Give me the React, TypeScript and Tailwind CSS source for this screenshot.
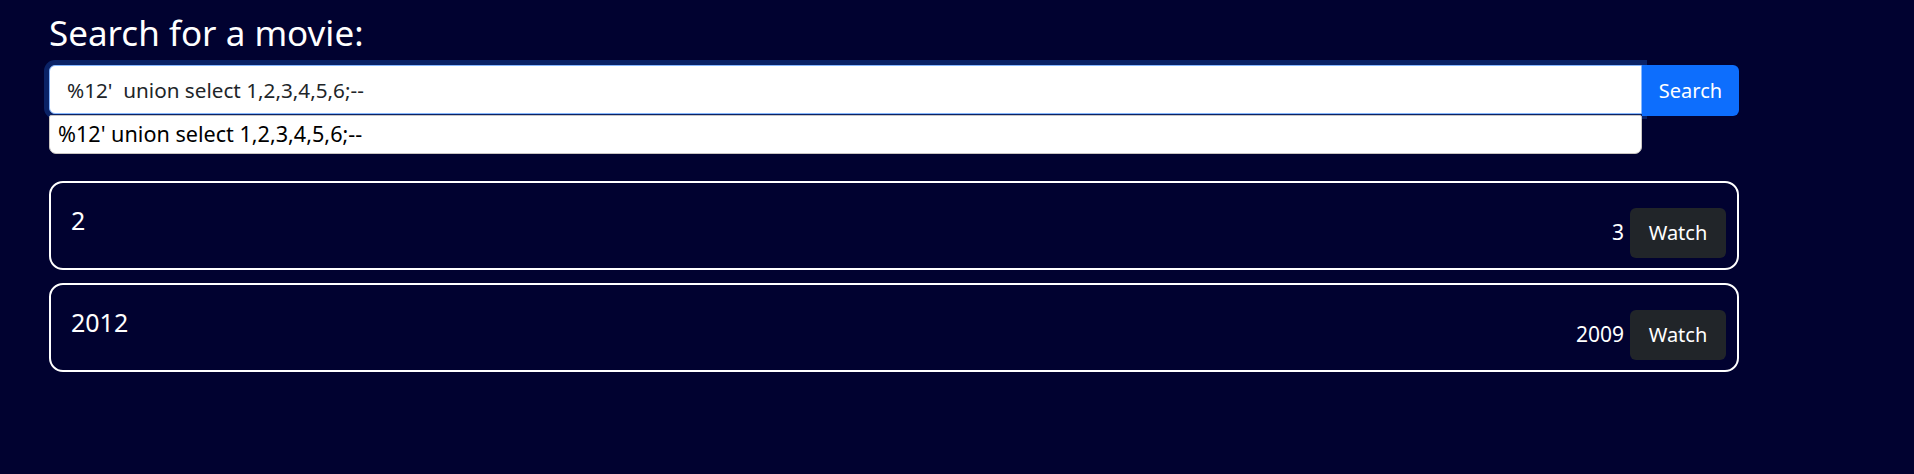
import { useState } from "react";

type Movie = { title: string; year: string };

const movies: Movie[] = [
  { title: "2", year: "3" },
  { title: "2012", year: "2009" },
];

function MovieCard({ movie }: { movie: Movie }) {
  return (
    <div className="flex items-end justify-between h-[89px] rounded-[14px] border-2 border-white pl-[20px] pr-[11px] pb-[10px] pt-[22px]">
      <h3 className="self-start text-[25px] leading-[1.2] text-white">{movie.title}</h3>
      <div className="flex items-center gap-[6px]">
        <span className="text-[21px] text-white">{movie.year}</span>
        <button className="h-[50px] w-[96px] rounded-[6px] bg-[#212529] text-[20px] text-white">
          Watch
        </button>
      </div>
    </div>
  );
}

export default function App() {
  const [query, setQuery] = useState("%12'  union select 1,2,3,4,5,6;--");

  return (
    <div className="min-h-[474px] bg-[#010230] font-['Noto_Sans',sans-serif]">
      <div className="ml-[49px] w-[1690px] pt-[12px]">
        <h1 className="text-[35px] leading-[1.2] text-white">Search for a movie:</h1>

        <div className="relative mt-[11px] flex">
          <div className="relative flex-1">
            <input
              value={query}
              onChange={(e) => setQuery(e.target.value)}
              className="h-[49px] w-full rounded-l-[6px] border border-[#86b7fe] bg-white px-[17px] text-[20.7px] text-[#212529] outline-none ring-[5px] ring-[#0a2266]"
            />
            {/* autocomplete popup */}
            <div className="absolute left-0 right-0 top-[50px] z-10 h-[39px] rounded-b-[7px] rounded-t-[2px] border border-[#c9c5c2] bg-white px-[8px] text-[21.6px] leading-[36px] text-black">
              %12' union select 1,2,3,4,5,6;--
            </div>
          </div>
          <button className="relative z-0 h-[51px] w-[97px] rounded-r-[6px] bg-[#0d6efd] text-[20px] text-white">
            Search
          </button>
        </div>

        <div className="mt-[65px] flex flex-col gap-[13px]">
          {movies.map((m) => (
            <MovieCard key={m.title} movie={m} />
          ))}
        </div>
      </div>
    </div>
  );
}
